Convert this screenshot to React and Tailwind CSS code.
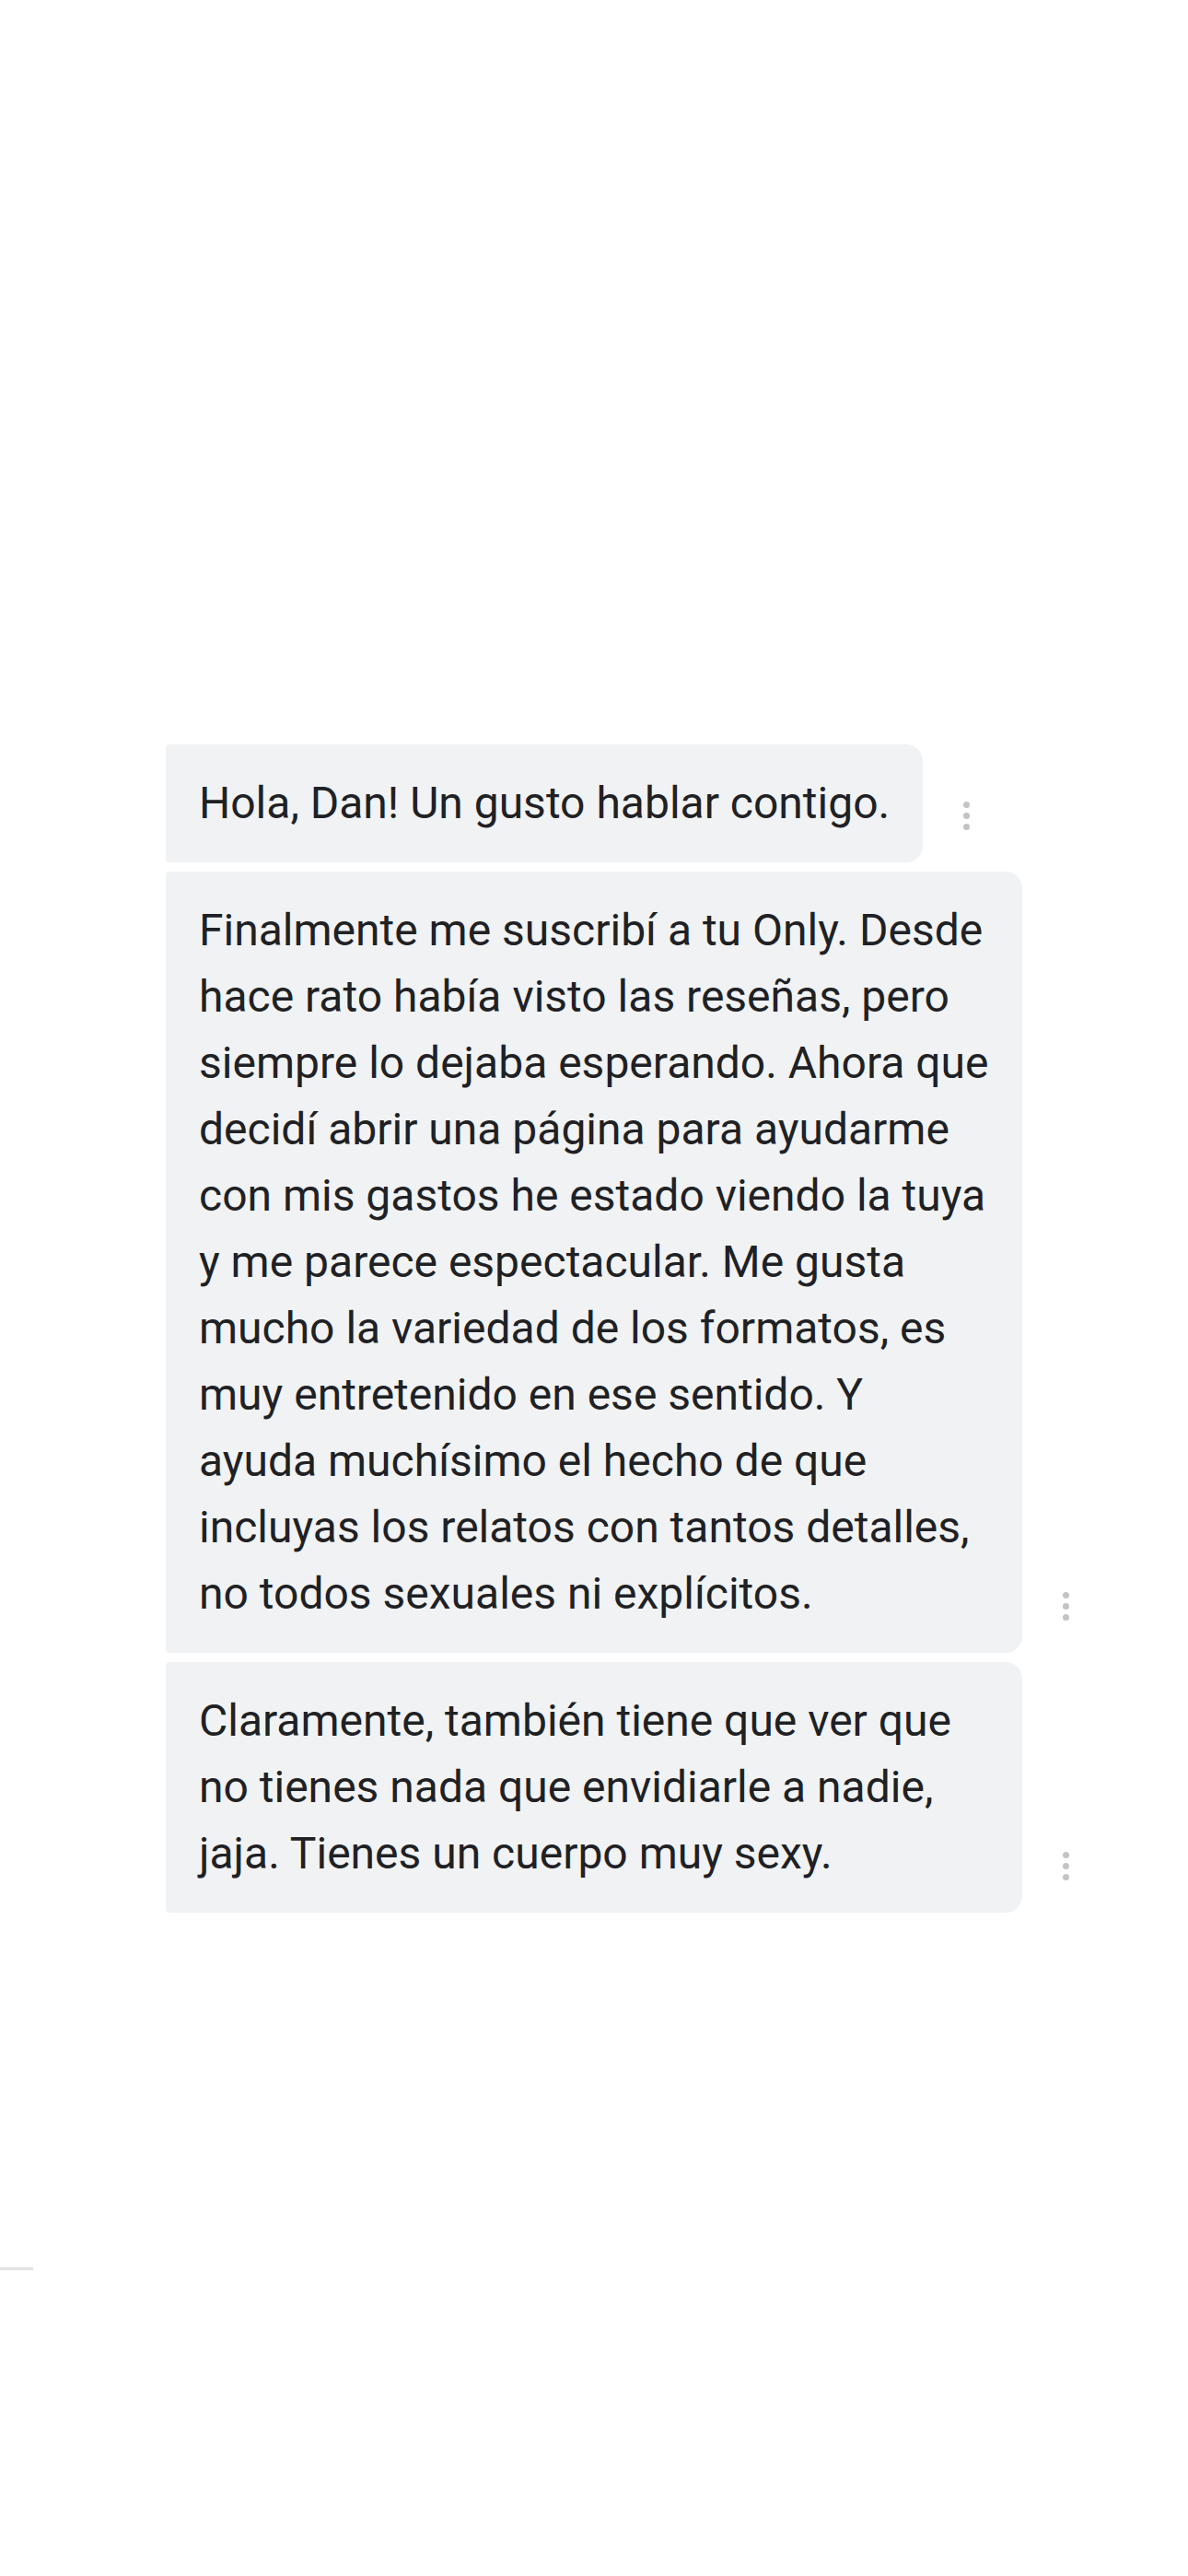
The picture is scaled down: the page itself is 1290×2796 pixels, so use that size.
import React from "react";

const messages = [
  ["Hola, Dan! Un gusto hablar contigo."],
  [
    "Finalmente me suscribí a tu Only. Desde",
    "hace rato había visto las reseñas, pero",
    "siempre lo dejaba esperando. Ahora que",
    "decidí abrir una página para ayudarme",
    "con mis gastos he estado viendo la tuya",
    "y me parece espectacular. Me gusta",
    "mucho la variedad de los formatos, es",
    "muy entretenido en ese sentido. Y",
    "ayuda muchísimo el hecho de que",
    "incluyas los relatos con tantos detalles,",
    "no todos sexuales ni explícitos.",
  ],
  [
    "Claramente, también tiene que ver que",
    "no tienes nada que envidiarle a nadie,",
    "jaja. Tienes un cuerpo muy sexy.",
  ],
];

function MoreDots() {
  return (
    <div className="flex flex-col gap-[5px] ml-[44px] mb-[35px] shrink-0">
      <span className="block w-[7px] h-[7px] rounded-full bg-[#c4c4c4]" />
      <span className="block w-[7px] h-[7px] rounded-full bg-[#c4c4c4]" />
      <span className="block w-[7px] h-[7px] rounded-full bg-[#c4c4c4]" />
    </div>
  );
}

function Bubble({ lines }) {
  const wide = lines.length > 1;
  return (
    <div className="flex items-end">
      <div
        className={
          wide
            ? "bg-[#f1f2f4] rounded-l-[4px] rounded-r-[18px] px-[36px] py-[28px] w-[930px]"
            : "bg-[#f1f2f4] rounded-l-[4px] rounded-r-[18px] px-[36px] py-[28px]"
        }
      >
        <p className="text-[48px] leading-[72px] text-[#202124] whitespace-nowrap">
          {lines.map((line, i) => (
            <React.Fragment key={i}>
              {line}
              {i < lines.length - 1 && <br />}
            </React.Fragment>
          ))}
        </p>
      </div>
      <MoreDots />
    </div>
  );
}

export default function App() {
  return (
    <div
      className="w-[1290px] h-[2796px] bg-white overflow-hidden"
      style={{ fontFamily: "Roboto, 'Noto Sans', sans-serif" }}
    >
      <div className="flex flex-col gap-[10px] pt-[808px] pl-[180px]">
        {messages.map((lines, i) => (
          <Bubble key={i} lines={lines} />
        ))}
      </div>
      <div className="mt-[385px] w-[36px] h-[3px] bg-[#e4e4e4]" />
    </div>
  );
}
